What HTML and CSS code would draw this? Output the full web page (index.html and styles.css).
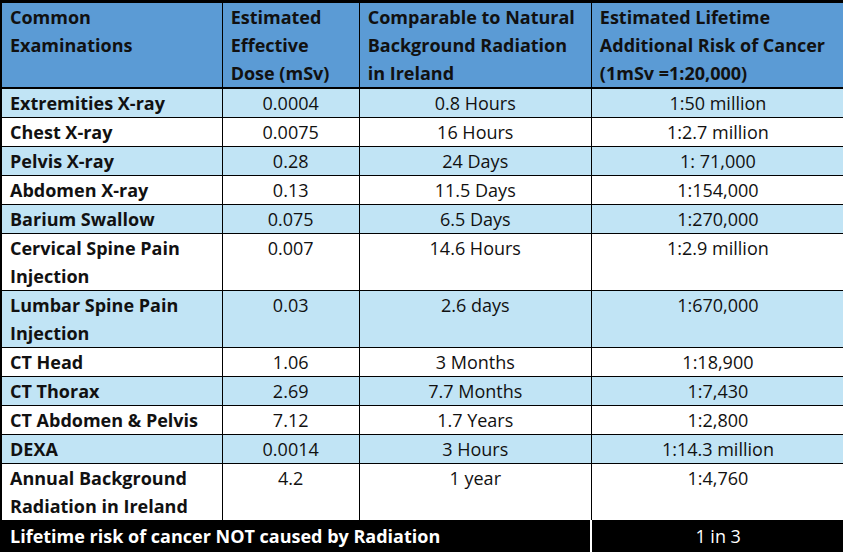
FILE: index.html
```html
<!DOCTYPE html>
<html>
<head>
<meta charset="utf-8">
<link rel="stylesheet" href="styles.css">
</head>
<body>
<table class="dose">
  <colgroup>
    <col class="c1"><col class="c2"><col class="c3"><col class="c4">
  </colgroup>
  <thead>
    <tr class="head">
      <th>Common<br>Examinations</th>
      <th>Estimated<br>Effective<br>Dose (mSv)</th>
      <th>Comparable to Natural<br>Background Radiation<br>in Ireland</th>
      <th>Estimated Lifetime<br>Additional Risk of Cancer<br>(1mSv =1:20,000)</th>
    </tr>
  </thead>
  <tbody>
    <tr class="alt"><td class="name">Extremities X-ray</td><td>0.0004</td><td>0.8 Hours</td><td>1:50 million</td></tr>
    <tr><td class="name">Chest X-ray</td><td>0.0075</td><td>16 Hours</td><td>1:2.7 million</td></tr>
    <tr class="alt"><td class="name">Pelvis X-ray</td><td>0.28</td><td>24 Days</td><td>1: 71,000</td></tr>
    <tr><td class="name">Abdomen X-ray</td><td>0.13</td><td>11.5 Days</td><td>1:154,000</td></tr>
    <tr class="alt"><td class="name">Barium Swallow</td><td>0.075</td><td>6.5 Days</td><td>1:270,000</td></tr>
    <tr><td class="name">Cervical Spine Pain<br>Injection</td><td>0.007</td><td>14.6 Hours</td><td>1:2.9 million</td></tr>
    <tr class="alt"><td class="name">Lumbar Spine Pain<br>Injection</td><td>0.03</td><td>2.6 days</td><td>1:670,000</td></tr>
    <tr><td class="name">CT Head</td><td>1.06</td><td>3 Months</td><td>1:18,900</td></tr>
    <tr class="alt"><td class="name">CT Thorax</td><td>2.69</td><td>7.7 Months</td><td>1:7,430</td></tr>
    <tr><td class="name">CT Abdomen &amp; Pelvis</td><td>7.12</td><td>1.7 Years</td><td>1:2,800</td></tr>
    <tr class="alt"><td class="name">DEXA</td><td>0.0014</td><td>3 Hours</td><td>1:14.3 million</td></tr>
    <tr><td class="name">Annual Background<br>Radiation in Ireland</td><td>4.2</td><td>1 year</td><td>1:4,760</td></tr>
    <tr class="total"><td class="name" colspan="3">Lifetime risk of cancer NOT caused by Radiation</td><td class="risk">1 in 3</td></tr>
  </tbody>
</table>
</body>
</html>
```

FILE: styles.css
```css
html, body {
  margin: 0;
  padding: 0;
  background: #000000;
  overflow: hidden;
}

.dose {
  border-collapse: collapse;
  table-layout: fixed;
  width: 845px;
  font-family: "Open Sans", "Liberation Sans", sans-serif;
  font-size: 18px;
  color: #111111;
  border-top: 3px solid #000;
  border-left: 2px solid #000;
}

.c1 { width: 221px; }
.c2 { width: 137px; }
.c3 { width: 232px; }
.c4 { width: 253px; }

.dose th,
.dose td {
  border: 1px solid #000;
  padding: 0 8px;
  line-height: 28px;
  vertical-align: top;
  white-space: nowrap;
}

.head th {
  background: #5b9bd5;
  text-align: left;
  font-weight: 700;
  border-bottom: 2px solid #000;
  border-top: none;
}

.dose td {
  text-align: center;
  background: #ffffff;
}

.dose td.name {
  text-align: left;
  font-weight: 700;
}

.dose tr.alt td {
  background: #c1e4f5;
}

.dose tr.total td {
  background: #000000;
  color: #ffffff;
  border-color: #000;
  line-height: 30px;
}

.dose tr.total td.risk {
  font-weight: 400;
  border-left: 2px solid #ffffff;
}
```
